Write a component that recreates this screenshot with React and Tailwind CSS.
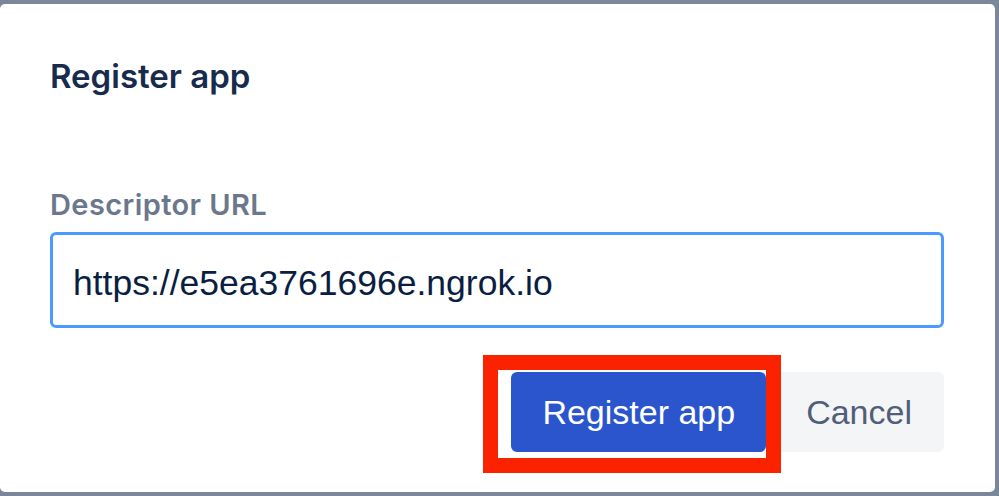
import React from 'react';

const App = () => {
  return (
    <div className="w-[999px] h-[496px] bg-[#7a869a] pt-[4px] overflow-hidden">
      <div className="relative w-[995px] h-[488px] bg-white rounded-[5px] pl-[50px] pr-[51px] pt-[52px]">
        {/* Header */}
        <h2 className="font-['Inter',sans-serif] font-semibold text-[33px] leading-[40px] text-[#172b4d]">
          Register app
        </h2>

        {/* Field */}
        <label className="block mt-[92px] font-['Inter',sans-serif] font-semibold text-[29px] leading-[34px] tracking-[0.4px] text-[#6b778c]">
          Descriptor URL
        </label>
        <input
          readOnly
          value="https://e5ea3761696e.ngrok.io"
          className="mt-[10px] block w-full h-[96px] border-[3px] border-[#4c9aff] rounded-[6px] pl-[20px] pt-[6px] font-['Liberation_Sans',Arial,sans-serif] text-[35.5px] text-[#091e42] outline-none"
        />

        {/* Actions */}
        <div className="flex justify-end gap-[8px] mt-[44px]">
          <button className="h-[80px] px-[31px] rounded-[6px] bg-[#2a55cc] text-white font-['Liberation_Sans',Arial,sans-serif] text-[34px]">
            Register app
          </button>
          <button className="h-[80px] px-[32px] rounded-[6px] bg-[#f4f5f7] text-[#505f79] font-['Liberation_Sans',Arial,sans-serif] text-[34px]">
            Cancel
          </button>
        </div>

        {/* Highlight annotation */}
        <div className="absolute left-[483px] top-[351px] w-[298px] h-[118px] border-[15px] border-[#fb2200]" />
      </div>
    </div>
  );
};

export default App;
